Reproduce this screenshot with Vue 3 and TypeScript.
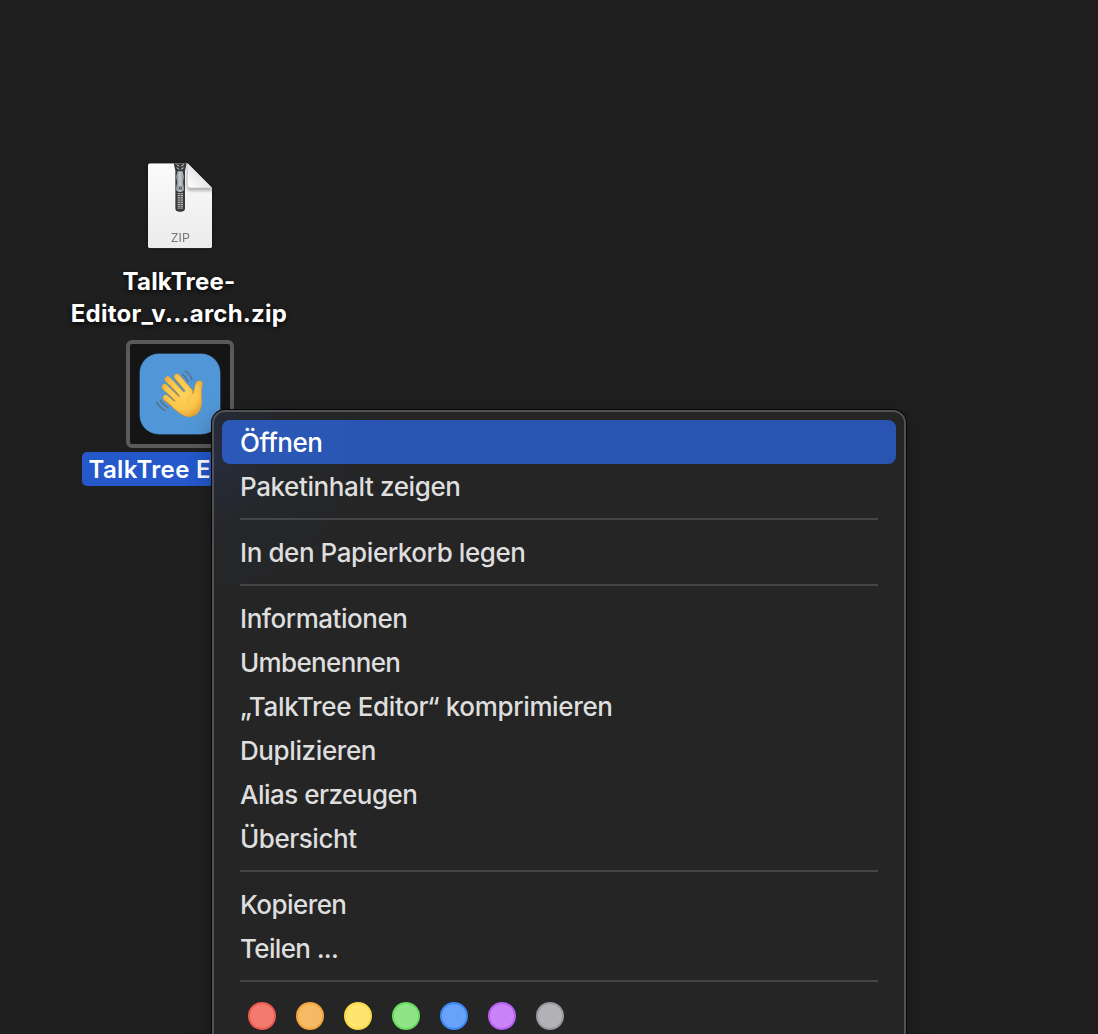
<script setup lang="ts">
interface MenuItem {
  label: string
  width: number
  active?: boolean
}

// Each group is separated from the next by a hairline; width is the label's measure in px.
const groups: MenuItem[][] = [
  [
    { label: 'Öffnen', width: 83, active: true },
    { label: 'Paketinhalt zeigen', width: 221 },
  ],
  [{ label: 'In den Papierkorb legen', width: 286 }],
  [
    { label: 'Informationen', width: 168 },
    { label: 'Umbenennen', width: 161 },
    { label: '„TalkTree Editor“ komprimieren', width: 373 },
    { label: 'Duplizieren', width: 136.5 },
    { label: 'Alias erzeugen', width: 178 },
    { label: 'Übersicht', width: 117 },
  ],
  [
    { label: 'Kopieren', width: 107 },
    { label: 'Teilen ...', width: 99 },
  ],
]

const tags = [
  { name: 'red', fill: '#f27a6f', ring: '#ee5a4d' },
  { name: 'orange', fill: '#f6ba65', ring: '#f2a53a' },
  { name: 'yellow', fill: '#fde570', ring: '#f9dc45' },
  { name: 'green', fill: '#8fe586', ring: '#68d95f' },
  { name: 'blue', fill: '#68a3f9', ring: '#3b87f7' },
  { name: 'purple', fill: '#ca83f9', ring: '#b85ff4' },
  { name: 'gray', fill: '#b3b2b7', ring: '#98979c' },
]

const teeth = Array.from({ length: 9 }, (_, i) => 116 + i * 5.4)
</script>

<template>
  <main class="desktop">
    <section class="file zip-file">
      <svg class="zip-icon" viewBox="0 0 240 300" aria-hidden="true">
        <defs>
          <linearGradient id="paper" x1="0" y1="0" x2="0" y2="1">
            <stop offset="0" stop-color="#fbfbfb" />
            <stop offset="1" stop-color="#ebebeb" />
          </linearGradient>
          <linearGradient id="fold" x1="0" y1="1" x2="1" y2="0">
            <stop offset="0" stop-color="#ffffff" />
            <stop offset=".5" stop-color="#e6e6e6" />
            <stop offset="1" stop-color="#fff" />
          </linearGradient>
          <linearGradient id="metal" x1="0" y1="0" x2="1" y2="0">
            <stop offset="0" stop-color="#85898b" />
            <stop offset=".5" stop-color="#c3cbce" />
            <stop offset="1" stop-color="#8d9193" />
          </linearGradient>
          <filter id="foldShade" x="-30%" y="-30%" width="160%" height="160%">
            <feGaussianBlur stdDeviation="5" />
          </filter>
          <clipPath id="page">
            <path d="M30 25H143L216 98V274Q216 280 210 280H30Q24 280 24 274V31Q24 25 30 25Z" />
          </clipPath>
        </defs>
        <g clip-path="url(#page)">
          <rect x="20" y="20" width="200" height="264" fill="url(#paper)" />
          <path d="M140 25V96Q143 107 151 107H222L216 98Z" fill="#777" opacity=".55" filter="url(#foldShade)" />
          <path d="M143 25V90Q143 98 151 98H216Z" fill="url(#fold)" />
          <path d="M100 20H141L135 47V160Q135 170 125 170H116Q106 170 106 160V47Z" fill="#37393b" />
          <path d="M110 29L118 34M132 28L123 34M110 38L118 43M131 38L123 43" stroke="#c8cacc" stroke-width="3" />
          <path d="M113 49H128L132 65L129 82L132 98V105Q128 111 120 111Q111 111 108 105V98L112 82L108 65Z" fill="url(#metal)" />
          <circle cx="121" cy="99" r="5.5" fill="#505254" />
          <circle cx="122" cy="98" r="2" fill="#d4d6d7" />
          <path v-for="y in teeth" :key="y" :d="`M113 ${y}H129`" stroke="#c8c8c8" stroke-width="3" />
          <path d="M121 113V164" stroke="#555" stroke-width="2" />
        </g>
        <text x="121" y="260" text-anchor="middle" class="zip-text">ZIP</text>
      </svg>
      <div class="filename"><span class="line first">TalkTree-</span><span class="line second">Editor_v...arch.zip</span></div>
    </section>

    <section class="file app-file">
      <div class="selection">
        <div class="app-tile">
          <svg viewBox="0 0 240 240" aria-hidden="true">
            <defs>
              <radialGradient id="skin" gradientUnits="userSpaceOnUse" cx="128" cy="118" r="75">
                <stop offset="0" stop-color="#ffd45b" />
                <stop offset=".65" stop-color="#fac64b" />
                <stop offset="1" stop-color="#e5a235" />
              </radialGradient>
            </defs>
            <g transform="translate(-2 0)">
              <g stroke="#d99a30" fill="none" stroke-linecap="round">
                <path d="M113 68L158 119" stroke-width="18" />
                <path d="M85 76L143 137" stroke-width="18" />
                <path d="M76 99L132 152" stroke-width="18" />
                <path d="M79 132L126 171" stroke-width="18" />
              </g>
              <path
                d="M103 145L146 103L158 118Q163 121 164 111L167 96Q170 79 183 80Q192 82 189 93Q185 105 186 122Q190 151 182 168Q174 185 155 188Q140 191 125 180L101 161Z"
                fill="url(#skin)"
                stroke="#d6942f"
                stroke-width="1.5"
              />
              <g stroke="url(#skin)" fill="none" stroke-linecap="round">
                <path d="M113 67L151 113" stroke-width="15" />
                <path d="M85 75L136 130" stroke-width="15" />
                <path d="M76 98L125 146" stroke-width="15" />
                <path d="M79 131L119 163" stroke-width="15" />
              </g>
              <g stroke="#ad7d3c" stroke-width="3" fill="none" opacity=".8">
                <path d="M106 77L133 108M89 92L118 122M85 120L108 142" />
              </g>
              <path d="M160 121Q145 128 147 145" stroke="#e5a63a" stroke-width="2" fill="none" opacity=".75" />
            </g>
            <g stroke="#5c6872" stroke-width="3.5" fill="none" stroke-linecap="round">
              <path d="M136 51Q151 60 156 77M127 61Q139 69 144 84M50 144Q57 160 75 170M62 140Q69 153 83 160" />
            </g>
          </svg>
        </div>
      </div>
      <div class="selected-name">TalkTree Editor</div>
    </section>

    <nav class="menu">
      <template v-for="(group, g) in groups" :key="g">
        <div v-for="item in group" :key="item.label" class="menu-item" :class="{ active: item.active }">
          <svg class="label" width="640" height="44">
            <text x="0" y="32" :textLength="item.width" lengthAdjust="spacing">{{ item.label }}</text>
          </svg>
        </div>
        <div class="separator"></div>
      </template>
      <div class="tags">
        <span v-for="tag in tags" :key="tag.name" class="tag" :style="{ background: tag.fill, borderColor: tag.ring }"></span>
      </div>
    </nav>
  </main>
</template>

<style>
html,
body {
  margin: 0;
  background: #1f1f1f;
  overflow: hidden;
}
</style>

<style scoped>
.desktop {
  position: relative;
  width: 1098px;
  height: 1034px;
  overflow: hidden;
  background: #1f1f1f;
  font-family: Inter, 'Liberation Sans', sans-serif;
}

.file {
  position: absolute;
  display: flex;
  flex-direction: column;
  align-items: center;
}

.zip-file {
  left: 60px;
  top: 155px;
  width: 240px;
}

.zip-icon {
  width: 80px;
  height: 100px;
  filter: drop-shadow(0 1px 2px rgba(0, 0, 0, 0.4));
}

.zip-text {
  font-family: Inter, sans-serif;
  font-size: 37px;
  fill: #757575;
}

.filename {
  display: flex;
  flex-direction: column;
  align-items: center;
  margin-top: 11px;
  color: #fff;
  font-size: 24px;
  font-weight: 700;
  line-height: 32px;
  letter-spacing: 0.24px;
  white-space: nowrap;
  text-shadow: 0 2px 5px rgba(0, 0, 0, 0.85);
}

.line {
  margin-right: 2px;
}

.app-file {
  left: 82px;
  top: 340px;
  width: 196px;
}

.selection {
  display: flex;
  align-items: center;
  justify-content: center;
  box-sizing: border-box;
  width: 108px;
  height: 108px;
  border: 4px solid #5a5a5a;
  border-radius: 6px;
  background: #151515;
}

.app-tile {
  width: 80px;
  height: 80px;
  border-radius: 19px;
  background: #5197d8;
  box-shadow: 0 0 0 0.5px #3f75a8;
}

.app-tile svg {
  display: block;
  width: 80px;
  height: 80px;
}

.selected-name {
  box-sizing: border-box;
  width: 196px;
  height: 34px;
  margin-top: 4px;
  padding-left: 6.5px;
  border-radius: 5px;
  background: #2458cb;
  color: #fff;
  font-size: 24px;
  font-weight: 600;
  line-height: 35px;
  letter-spacing: 0.36px;
  white-space: nowrap;
}

.menu {
  position: absolute;
  left: 212px;
  top: 410px;
  box-sizing: border-box;
  width: 694px;
  height: 660px;
  padding: 8px;
  border: 2px solid #505152;
  border-radius: 13px;
  background:
    radial-gradient(circle at 0 40px, rgba(40, 49, 79, 0.6), rgba(37, 42, 49, 0.35) 75px, transparent 180px),
    #252525;
  box-shadow:
    0 0 0 1px #070707,
    0 8px 24px rgba(0, 0, 0, 0.3);
}

.menu-item {
  height: 44px;
  padding-left: 18px;
  border-radius: 8px;
  color: #dedede;
}

.menu-item.active {
  background: linear-gradient(90deg, #2c59b9, #2954b2 25%);
  color: #fff;
}

.label {
  display: block;
}

.label text {
  fill: currentColor;
  font-size: 26px;
  font-weight: 450;
}

.separator {
  height: 2px;
  margin: 10px 18px;
  background: #444546;
}

.tags {
  display: flex;
  gap: 20px;
  padding: 10px 26px 0;
}

.tag {
  box-sizing: border-box;
  width: 28px;
  height: 28px;
  border: 2px solid;
  border-radius: 50%;
}
</style>
